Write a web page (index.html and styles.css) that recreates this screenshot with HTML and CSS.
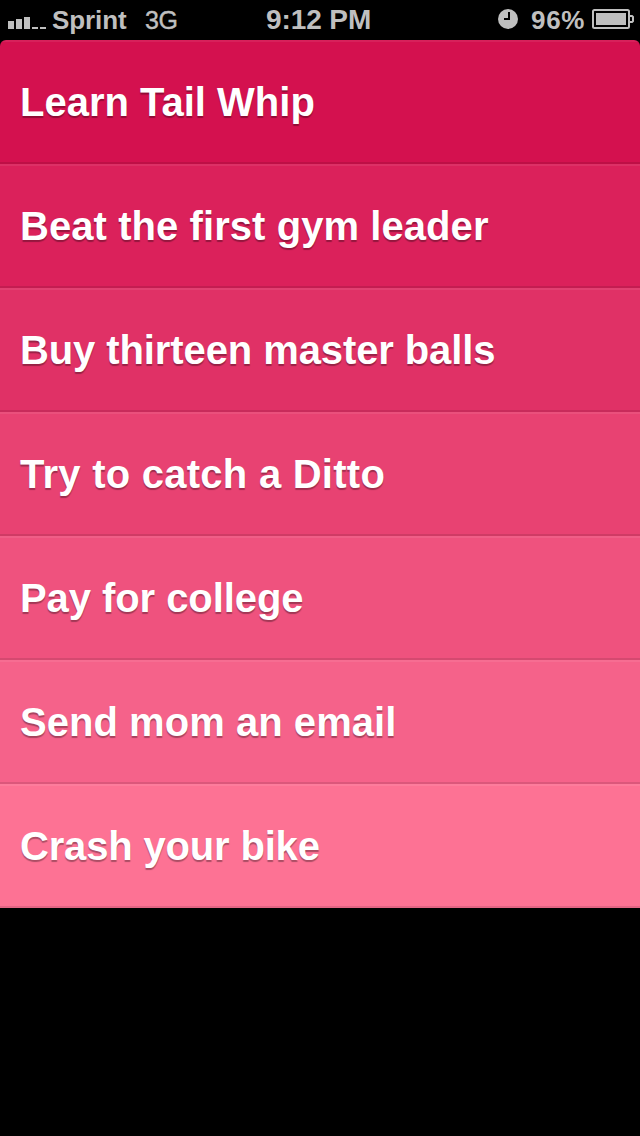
FILE: index.html
```html
<!DOCTYPE html>
<html lang="en">
<head>
<meta charset="utf-8">
<title>Tasks</title>
<link rel="stylesheet" href="styles.css">
</head>
<body>
<header class="status">
  <div class="status-left">
    <svg class="signal" width="38" height="13" viewBox="0 0 38 13"><path d="M0 5h6v8H0zM8 3h6v10H8zM16 1h6v12h-6zM24 11h6v2h-6zM32 11h6v2h-6z"/></svg>
    <span class="carrier">Sprint</span>
    <span class="network">3G</span>
  </div>
  <time class="clock">9:12 PM</time>
  <div class="status-right">
    <svg class="alarm" width="20" height="20" viewBox="0 0 20 20"><circle cx="10" cy="10" r="10"/><path class="hands" d="M11 3v7H6"/></svg>
    <span class="percent">96%</span>
    <svg class="battery" width="42" height="20" viewBox="0 0 42 20"><rect class="shell" x="1" y="1" width="36" height="18" rx="1.5"/><path d="M4 4h30v12H4z"/><path class="shell" d="M37 7h3l1 1v4l-1 1h-3"/></svg>
  </div>
</header>
<ul class="list">
  <li class="task t1"><span>Learn Tail Whip</span></li>
  <li class="task t2"><span>Beat the first gym leader</span></li>
  <li class="task t3"><span>Buy thirteen master balls</span></li>
  <li class="task t4"><span>Try to catch a Ditto</span></li>
  <li class="task t5"><span>Pay for college</span></li>
  <li class="task t6"><span>Send mom an email</span></li>
  <li class="task t7"><span>Crash your bike</span></li>
</ul>
</body>
</html>
```
FILE: styles.css
```css
* { box-sizing: border-box; }
body {
  margin: 0;
  min-height: 1136px;
  background: #000;
  font-family: "Liberation Sans", Arial, sans-serif;
}
.status {
  display: grid;
  grid-template-columns: 266px 1fr 142px;
  height: 40px;
  color: #bfbfbf;
  fill: #bfbfbf;
  font-size: 26px;
  font-weight: bold;
  line-height: 40px;
  white-space: nowrap;
}
.status-left, .status-right { display: flex; align-items: flex-start; }
.signal { margin: 16px 6px 0 8px; flex: none; }
.carrier { width: 93px; letter-spacing: -0.1px; }
.network { font-weight: normal; font-size: 25px; letter-spacing: -0.5px; -webkit-text-stroke: 0.4px #bfbfbf; }
.clock { font-size: 28px; letter-spacing: -0.1px; line-height: 39px; }
.alarm { margin: 9px 13px 0 0; flex: none; }
.hands { fill: none; stroke: #000; stroke-width: 2; }
.percent { width: 61px; letter-spacing: 0.7px; }
.battery { margin-top: 9px; flex: none; }
.shell { fill: none; stroke: #bfbfbf; stroke-width: 2; }
.list {
  margin: 0;
  padding: 0;
  list-style: none;
  border-radius: 6px 6px 0 0;
  overflow: hidden;
}
.task {
  height: 124px;
  padding: 0 20px;
  color: #fff;
  font-size: 40px;
  font-weight: bold;
  line-height: 120px;
  white-space: nowrap;
  text-shadow: 0 2px 1px rgba(0, 0, 0, 0.32);
  border-top: 2px solid rgba(255, 255, 255, 0.07);
  border-bottom: 2px solid rgba(0, 0, 0, 0.1);
}
.t1 { background-color: #d4114f; }
.t2 { background-color: #db215b; letter-spacing: 0.07px; }
.t3 { background-color: #e03166; letter-spacing: -0.1px; }
.t4 { background-color: #e84272; letter-spacing: 0.25px; }
.t5 { background-color: #ef527e; letter-spacing: -0.07px; }
.t6 { background-color: #f5628a; letter-spacing: 0.04px; }
.t7 { background-color: #fd7294; letter-spacing: -0.17px; }
```
